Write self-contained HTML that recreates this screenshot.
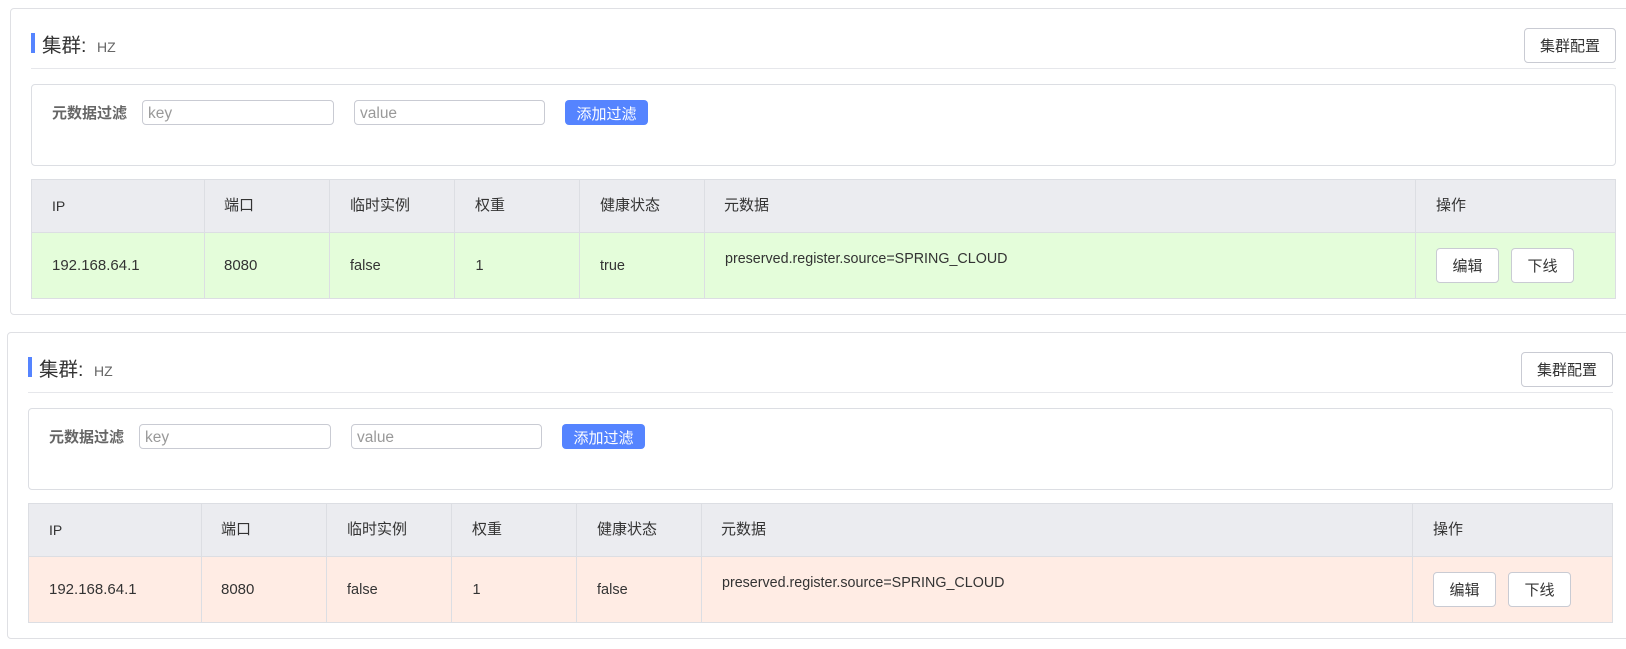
<!DOCTYPE html>
<html lang="zh-CN">
<head>
<meta charset="utf-8">
<title>集群</title>
<style>
*{box-sizing:border-box}
html,body{margin:0;padding:0;width:1626px;height:649px;overflow:hidden;background:#fff}
body{position:relative;font-family:"Liberation Sans","Noto Sans CJK SC",sans-serif;color:#333}
.card{position:absolute;width:1640px;height:307px;border:1px solid #dfe0e4;border-radius:4px;background:#fff}
.a{position:absolute;white-space:nowrap}
.bar{left:20px;top:24px;width:4px;height:20px;background:#5584ff}
.title{left:31px;top:23px;font-size:19.5px;line-height:28px;color:#333}
.hz{left:86px;top:28px;font-size:14px;line-height:20px;color:#666}
.hline{left:20px;top:59px;width:1585px;height:1px;background:#e6e7eb}
.btn{display:flex;align-items:center;justify-content:center;background:#fff;border:1px solid #c9cbd3;border-radius:4px;font-size:15px;color:#333}
.cfg{left:1513px;top:19px;width:92px;height:35px}
.filter{left:20px;top:75px;width:1585px;height:82px;border:1px solid #dcdee3;border-radius:4px}
.lab{left:41px;top:94px;font-size:15px;line-height:22px;color:#666;font-weight:bold}
.inp{top:91px;height:25px;border:1px solid #c9cbd3;border-radius:4px;background:#fff;font-size:15.5px;line-height:25px;color:#999;padding-left:5px}
.add{left:554px;top:91px;width:83px;height:25px;padding-top:1px;background:#5584ff;border-radius:4px;color:#fff;font-size:15px;display:flex;align-items:center;justify-content:center}
.tbl{left:20px;top:170px;width:1585px;height:120px;border:1px solid #dcdee3;background:#fff;overflow:hidden}
.head{position:absolute;left:0;top:0;width:100%;height:53px;background:#ebecf0;border-bottom:1px solid #dcdee3}
.row{position:absolute;left:0;top:53px;width:100%;height:65px}
.vl{position:absolute;top:0;width:1px;height:118px;background:#dcdee3}
.th{position:absolute;top:15px;font-size:15px;line-height:22px;color:#333;white-space:nowrap}
.td{position:absolute;top:75px;font-size:14.5px;line-height:22px;color:#333;white-space:nowrap}
.ed{top:239px;width:63px;height:35px}
</style>
</head>
<body>

<div class="card" style="left:10px;top:8px">
  <div class="a bar"></div>
  <div class="a title">集群:</div>
  <div class="a hz">HZ</div>
  <div class="a hline"></div>
  <div class="a btn cfg">集群配置</div>
  <div class="a filter"></div>
  <div class="a lab">元数据过滤</div>
  <div class="a inp" style="left:131px;width:192px">key</div>
  <div class="a inp" style="left:343px;width:191px">value</div>
  <div class="a add">添加过滤</div>
  <div class="a tbl">
    <div class="head"></div>
    <div class="row" style="background:#e4fdda"></div>
    <div class="vl" style="left:172px"></div>
    <div class="vl" style="left:297px"></div>
    <div class="vl" style="left:422px"></div>
    <div class="vl" style="left:547px"></div>
    <div class="vl" style="left:672px"></div>
    <div class="vl" style="left:1383px"></div>
    <div class="th" style="left:20px;font-size:14px">IP</div>
    <div class="th" style="left:192px">端口</div>
    <div class="th" style="left:318px">临时实例</div>
    <div class="th" style="left:443px">权重</div>
    <div class="th" style="left:568px">健康状态</div>
    <div class="th" style="left:692px">元数据</div>
    <div class="th" style="left:1404px">操作</div>
    <div class="td" style="left:20px;font-size:15px">192.168.64.1</div>
    <div class="td" style="left:192px;font-size:15px">8080</div>
    <div class="td" style="left:318px">false</div>
    <div class="td" style="left:443.5px">1</div>
    <div class="td" style="left:568px">true</div>
    <div class="td" style="left:693px;top:68px;font-size:14.3px">preserved.register.source=SPRING_CLOUD</div>
  </div>
  <div class="a btn ed" style="left:1425px">编辑</div>
  <div class="a btn ed" style="left:1500px">下线</div>
</div>

<div class="card" style="left:7px;top:332px">
  <div class="a bar"></div>
  <div class="a title">集群:</div>
  <div class="a hz">HZ</div>
  <div class="a hline"></div>
  <div class="a btn cfg">集群配置</div>
  <div class="a filter"></div>
  <div class="a lab">元数据过滤</div>
  <div class="a inp" style="left:131px;width:192px">key</div>
  <div class="a inp" style="left:343px;width:191px">value</div>
  <div class="a add">添加过滤</div>
  <div class="a tbl">
    <div class="head"></div>
    <div class="row" style="background:#ffece4"></div>
    <div class="vl" style="left:172px"></div>
    <div class="vl" style="left:297px"></div>
    <div class="vl" style="left:422px"></div>
    <div class="vl" style="left:547px"></div>
    <div class="vl" style="left:672px"></div>
    <div class="vl" style="left:1383px"></div>
    <div class="th" style="left:20px;font-size:14px">IP</div>
    <div class="th" style="left:192px">端口</div>
    <div class="th" style="left:318px">临时实例</div>
    <div class="th" style="left:443px">权重</div>
    <div class="th" style="left:568px">健康状态</div>
    <div class="th" style="left:692px">元数据</div>
    <div class="th" style="left:1404px">操作</div>
    <div class="td" style="left:20px;font-size:15px">192.168.64.1</div>
    <div class="td" style="left:192px;font-size:15px">8080</div>
    <div class="td" style="left:318px">false</div>
    <div class="td" style="left:443.5px">1</div>
    <div class="td" style="left:568px">false</div>
    <div class="td" style="left:693px;top:68px;font-size:14.3px">preserved.register.source=SPRING_CLOUD</div>
  </div>
  <div class="a btn ed" style="left:1425px">编辑</div>
  <div class="a btn ed" style="left:1500px">下线</div>
</div>

</body>
</html>
